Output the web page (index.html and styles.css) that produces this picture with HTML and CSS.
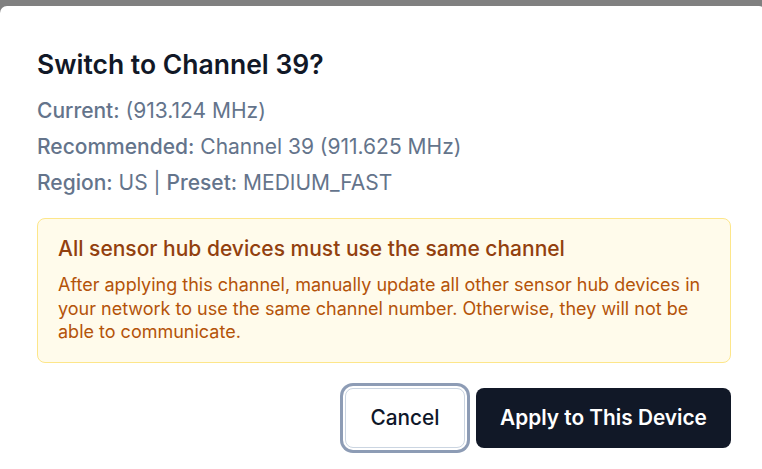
FILE: index.html
```html
<!DOCTYPE html>
<html lang="en">
<head>
<meta charset="utf-8">
<title>Switch Channel</title>
<link rel="stylesheet" href="styles.css">
</head>
<body>
<div class="dialog">
  <h2 class="title">Switch to Channel 39?</h2>
  <div class="info">
    <p class="line"><span class="label">Current:</span> (913.124 MHz)</p>
    <p class="line"><span class="label">Recommended:</span> Channel 39 (911.625 MHz)</p>
    <p class="line"><span class="label">Region:</span> US | <span class="label">Preset:</span> MEDIUM_FAST</p>
  </div>
  <div class="alert">
    <div class="alert-title">All sensor hub devices must use the same channel</div>
    <div class="alert-body">After applying this channel, manually update all other sensor hub devices in your network to use the same channel number. Otherwise, they will not be able to communicate.</div>
  </div>
  <div class="actions">
    <button class="btn btn-cancel">Cancel</button>
    <button class="btn btn-apply">Apply to This Device</button>
  </div>
</div>
</body>
</html>
```
FILE: styles.css
```css
html, body {
  margin: 0;
  padding: 0;
  height: 100%;
  overflow: hidden;
}
body {
  background: #808080;
  font-family: Inter, "Noto Sans", sans-serif;
  padding-top: 6px;
  box-sizing: border-box;
}
.dialog {
  background: #ffffff;
  width: 766px;
  min-height: 520px;
  border-radius: 7px;
  box-sizing: border-box;
  padding: 40px 35px 0 37px;
}
.title {
  margin: 0;
  font-size: 26.5px;
  font-weight: 600;
  color: #111827;
  line-height: 36px;
}
.info {
  margin-top: 11px;
}
.line {
  margin: 0;
  font-size: 21px;
  line-height: 36px;
  color: #64748b;
}
.label {
  font-weight: 500;
}
.alert {
  margin-top: 17px;
  background: #fffbeb;
  border: 1px solid #fde68a;
  border-radius: 8px;
  padding: 16px 20px 18px 20px;
}
.alert-title {
  font-size: 21px;
  font-weight: 500;
  color: #92400e;
  line-height: 28px;
}
.alert-body {
  margin-top: 10px;
  font-size: 18px;
  line-height: 23.5px;
  color: #b45309;
}
.actions {
  display: flex;
  justify-content: flex-end;
  gap: 11px;
  margin-top: 25px;
}
.btn {
  height: 60px;
  border-radius: 8px;
  font-family: Inter, "Noto Sans", sans-serif;
  font-size: 20.8px;
  cursor: pointer;
  padding: 0;
}
.btn-cancel {
  width: 120px;
  background: #ffffff;
  color: #0f172a;
  border: 1px solid #cbd5e1;
  font-weight: 500;
  box-shadow: 0 0 0 2px #ffffff, 0 0 0 5px #8d9cb5;
}
.btn-apply {
  width: 255px;
  background: #111827;
  color: #ffffff;
  border: none;
  font-weight: 600;
}
```
